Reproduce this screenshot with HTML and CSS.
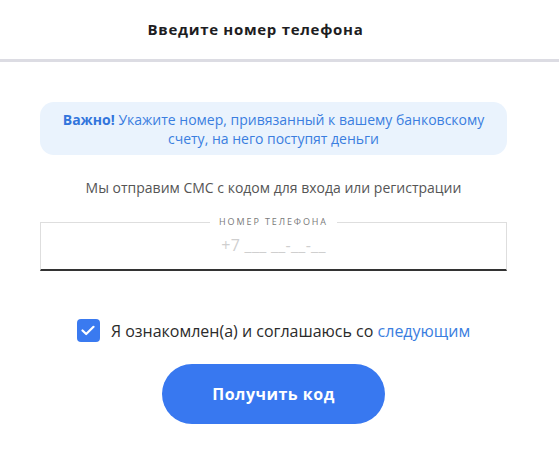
FILE: index.html
```html
<!DOCTYPE html>
<html lang="ru">
<head>
<meta charset="utf-8">
<link rel="stylesheet" href="styles.css">
</head>
<body>
<header class="header">
  <h1 class="title">Введите номер телефона</h1>
</header>
<main class="content">
  <div class="notice"><b>Важно!</b> Укажите номер, привязанный к вашему банковскому счету, на него поступят деньги</div>
  <p class="hint">Мы отправим СМС с кодом для входа или регистрации</p>
  <fieldset class="field">
    <legend class="legend">НОМЕР ТЕЛЕФОНА</legend>
    <div class="placeholder">+7 ___ __-__-__</div>
  </fieldset>
  <label class="agree">
    <span class="check">
      <svg width="14" height="11" viewBox="0 0 14 11"><path d="M1.5 5.5 L5.2 9 L12.5 1.8" fill="none" stroke="#fff" stroke-width="2.2" stroke-linecap="round" stroke-linejoin="round"/></svg>
    </span>
    <span class="agree-text">Я ознакомлен(а) и соглашаюсь со <a class="link">следующим</a></span>
  </label>
  <button class="btn">Получить код</button>
</main>
</body>
</html>
```
FILE: styles.css
```css
html, body {
  margin: 0;
  padding: 0;
  background: #fff;
  font-family: "Open Sans", "Noto Sans", sans-serif;
}
.header {
  height: 62px;
  border-bottom: 3px solid #dcdce3;
  display: flex;
  align-items: center;
  justify-content: center;
  padding-right: 48px;
  box-sizing: border-box;
}
.title {
  margin: 0;
  font-size: 15px;
  font-weight: 700;
  letter-spacing: 0.7px;
  color: #1d1d22;
  padding-bottom: 1px;
}
.content {
  margin: 0 52px 0 40px;
  display: flex;
  flex-direction: column;
  align-items: center;
}
.notice {
  margin-top: 40px;
  align-self: stretch;
  background: #eaf3fd;
  border-radius: 14px;
  color: #3a7ee0;
  font-size: 14px;
  line-height: 19px;
  text-align: center;
  padding: 8px 20px 7px;
}
.notice b { font-weight: 700; color: #3275dc; }
.hint {
  margin: 23px 0 0;
  font-size: 14px;
  line-height: 19px;
  color: #555;
}
.field {
  align-self: stretch;
  margin: 19px 0 0;
  padding: 0 0 12px;
  border: 1px solid #dedede;
  border-bottom: 2px solid #333;
  text-align: center;
  height: 40px;
}
.legend {
  margin: 0 auto;
  padding: 0 9px;
  font-size: 9px;
  letter-spacing: 1.9px;
  color: #7a7a7a;
  line-height: 12px;
}
.placeholder {
  margin-top: 6px;
  font-size: 16px;
  color: #cfcfcf;
  letter-spacing: 0.3px;
}
.agree {
  margin-top: 48px;
  display: flex;
  align-items: center;
  gap: 11px;
}
.check {
  width: 23px;
  height: 23px;
  border-radius: 4px;
  background: #3a7af0;
  display: flex;
  align-items: center;
  justify-content: center;
}
.agree-text {
  font-size: 16px;
  color: #2b2b2b;
}
.link { color: #3a7ee0; }
.btn {
  margin-top: 22px;
  width: 223px;
  height: 60px;
  border: 0;
  border-radius: 30px;
  background: #3878f0;
  color: #fff;
  font-family: "Open Sans", sans-serif;
  font-size: 16px;
  font-weight: 700;
  letter-spacing: 0.5px;
}
```
